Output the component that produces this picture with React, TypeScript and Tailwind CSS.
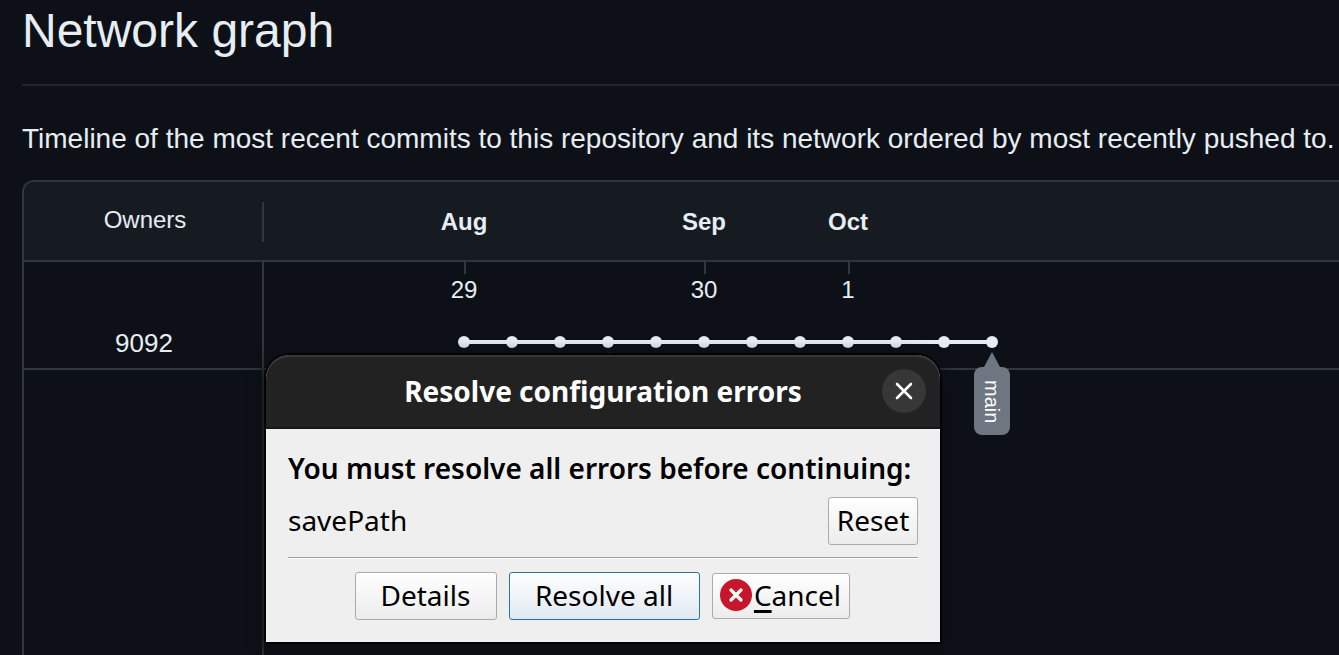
import type { ReactNode } from "react";

type DateMark = { month: string; day: number; column: string };

const dateMarks: DateMark[] = [
  { month: "Aug", day: 29, column: "col-start-1" },
  { month: "Sep", day: 30, column: "col-start-6" },
  { month: "Oct", day: 1, column: "col-start-9" },
];

const commits = Array.from({ length: 12 }, (_, i) => 24 + i * 48);

function CommitGraph() {
  return (
    <svg width="576" height="32" className="block" role="img" aria-label="Commits on main">
      <rect x="168" y="16" width="2" height="16" fill="#21262d" />
      <rect x="24" y="4" width="528" height="4" fill="#e6ebf4" />
      {commits.map((cx) => (
        <circle key={cx} cx={cx} cy="6" r="6" fill="#e6ebf4" />
      ))}
    </svg>
  );
}

function BranchTag({ name }: { name: string }) {
  return (
    <div className="absolute left-[710px] top-[90px] flex flex-col items-center">
      <svg width="18" height="15" className="block" aria-hidden="true">
        <path d="M9 0 L17 15 H1 Z" fill="#6e7681" />
      </svg>
      <span className="flex h-[68px] w-9 items-center justify-center rounded-lg bg-[#6e7681] pt-0.5 text-xl leading-6 text-white [writing-mode:vertical-rl]">
        {name}
      </span>
    </div>
  );
}

function NetworkGraph() {
  return (
    <section className="flex grow flex-col rounded-tl-xl border-l-2 border-t-2 border-[#30363d]">
      <div className="flex h-20 shrink-0 items-center rounded-tl-[10px] border-b-2 border-[#30363d] bg-[#161b22] pt-0.5">
        <div className="flex h-10 w-60 shrink-0 items-center justify-center border-r-2 border-[#30363d] pb-1 pl-1 text-2xl text-[#e6edf3]">
          Owners
        </div>
        <div className="grid grid-cols-[repeat(12,48px)] pl-44 text-2xl font-bold text-[#e6edf3]">
          {dateMarks.map((m) => (
            <span key={m.month} className={`${m.column} row-start-1 text-center`}>
              {m.month}
            </span>
          ))}
        </div>
      </div>
      <div className="flex h-[108px] shrink-0 border-b-2 border-[#30363d]">
        <div className="flex w-60 shrink-0 items-end justify-center border-r-2 border-[#30363d] pb-[9px] pl-0.5 text-[26px] leading-8 text-[#e6edf3]">
          9092
        </div>
        <div className="relative pl-44">
          <div className="grid h-[74px] grid-cols-[repeat(12,48px)] text-2xl text-[#e6edf3]">
            {dateMarks.map((m) => (
              <div key={m.month} className={`${m.column} row-start-1 flex flex-col items-center`}>
                <span className="ml-0.5 h-3 w-0.5 bg-[#30363d]" />
                <span className="leading-8">{m.day}</span>
              </div>
            ))}
          </div>
          <CommitGraph />
          <BranchTag name="main" />
        </div>
      </div>
      <div className="w-60 grow border-r-2 border-[#30363d]" />
    </section>
  );
}

function DialogButton({ children, className = "" }: { children: ReactNode; className?: string }) {
  return (
    <button
      type="button"
      className={`flex items-center justify-center rounded-[3px] border bg-linear-to-b pb-0.5 text-[28px] leading-8 text-black ${className}`}
    >
      {children}
    </button>
  );
}

function ErrorDialog() {
  return (
    <div
      role="dialog"
      aria-labelledby="dialog-title"
      className="absolute left-[266px] top-[355px] w-[674px] rounded-t-3xl bg-[#efefef] font-['Noto_Sans','Open_Sans',sans-serif] text-black shadow-[0_0_0_2px_#030405,0_4px_14px_4px_#0b0e12]"
    >
      <header className="relative flex h-[74px] items-center justify-center rounded-t-3xl border-b-2 border-[#171717] bg-[#222222] shadow-[inset_0_2px_0_#363636]">
        <h2 id="dialog-title" className="text-[28px] font-bold leading-8 text-white">
          Resolve configuration errors
        </h2>
        <button
          type="button"
          aria-label="Close"
          className="absolute right-3.5 top-3.5 flex size-11 items-center justify-center rounded-full bg-[#373737]"
        >
          <svg width="18" height="18" viewBox="0 0 18 18" aria-hidden="true">
            <path d="M2 2 L16 16 M16 2 L2 16" stroke="#ffffff" strokeWidth="2.6" strokeLinecap="round" />
          </svg>
        </button>
      </header>
      <div className="px-[22px] pb-[22px] pt-[19px]">
        <p className="whitespace-nowrap text-[28px] font-semibold leading-10">
          You must resolve all errors before continuing:
        </p>
        <div className="mt-[9px] flex items-center justify-between">
          <span className="pb-0.5 text-[28px] leading-8">savePath</span>
          <DialogButton className="h-12 w-[90px] border-[#ababab] from-white to-[#ececec]">Reset</DialogButton>
        </div>
        <hr className="mt-3 h-0.5 border-b border-t border-b-white border-t-[#9c9c9c]" />
        <div className="mt-[13px] flex items-center justify-center gap-3 pr-0.5">
          <DialogButton className="h-12 w-[142px] border-[#ababab] from-white to-[#ececec]">Details</DialogButton>
          <DialogButton className="h-12 w-[191px] border-[#2a73a5] from-white to-[#e0e9f1]">Resolve all</DialogButton>
          <DialogButton className="h-[46px] w-[138px] gap-0.5 border-[#ababab] from-white to-[#ececec]">
            <svg width="32" height="32" viewBox="0 0 32 32" className="shrink-0" aria-hidden="true">
              <circle cx="16" cy="16" r="16" fill="#c7162b" />
              <path d="M11 11 L21 21 M21 11 L11 21" stroke="#ffffff" strokeWidth="3.2" strokeLinecap="round" />
            </svg>
            <span>
              <span className="underline decoration-[3px] underline-offset-4">C</span>ancel
            </span>
          </DialogButton>
        </div>
      </div>
    </div>
  );
}

export default function App() {
  return (
    <main className="relative flex h-screen flex-col overflow-hidden bg-[#0d1117] pl-[22px] font-['Liberation_Sans',Arial,sans-serif] text-[#e6edf3]">
      <h1 className="h-[86px] shrink-0 border-b-2 border-[#21262d] text-5xl leading-[62px]">Network graph</h1>
      <p className="mb-5 mt-8 whitespace-nowrap text-[28px] leading-[42px]">
        Timeline of the most recent commits to this repository and its network ordered by most recently pushed to.
      </p>
      <NetworkGraph />
      <ErrorDialog />
    </main>
  );
}
